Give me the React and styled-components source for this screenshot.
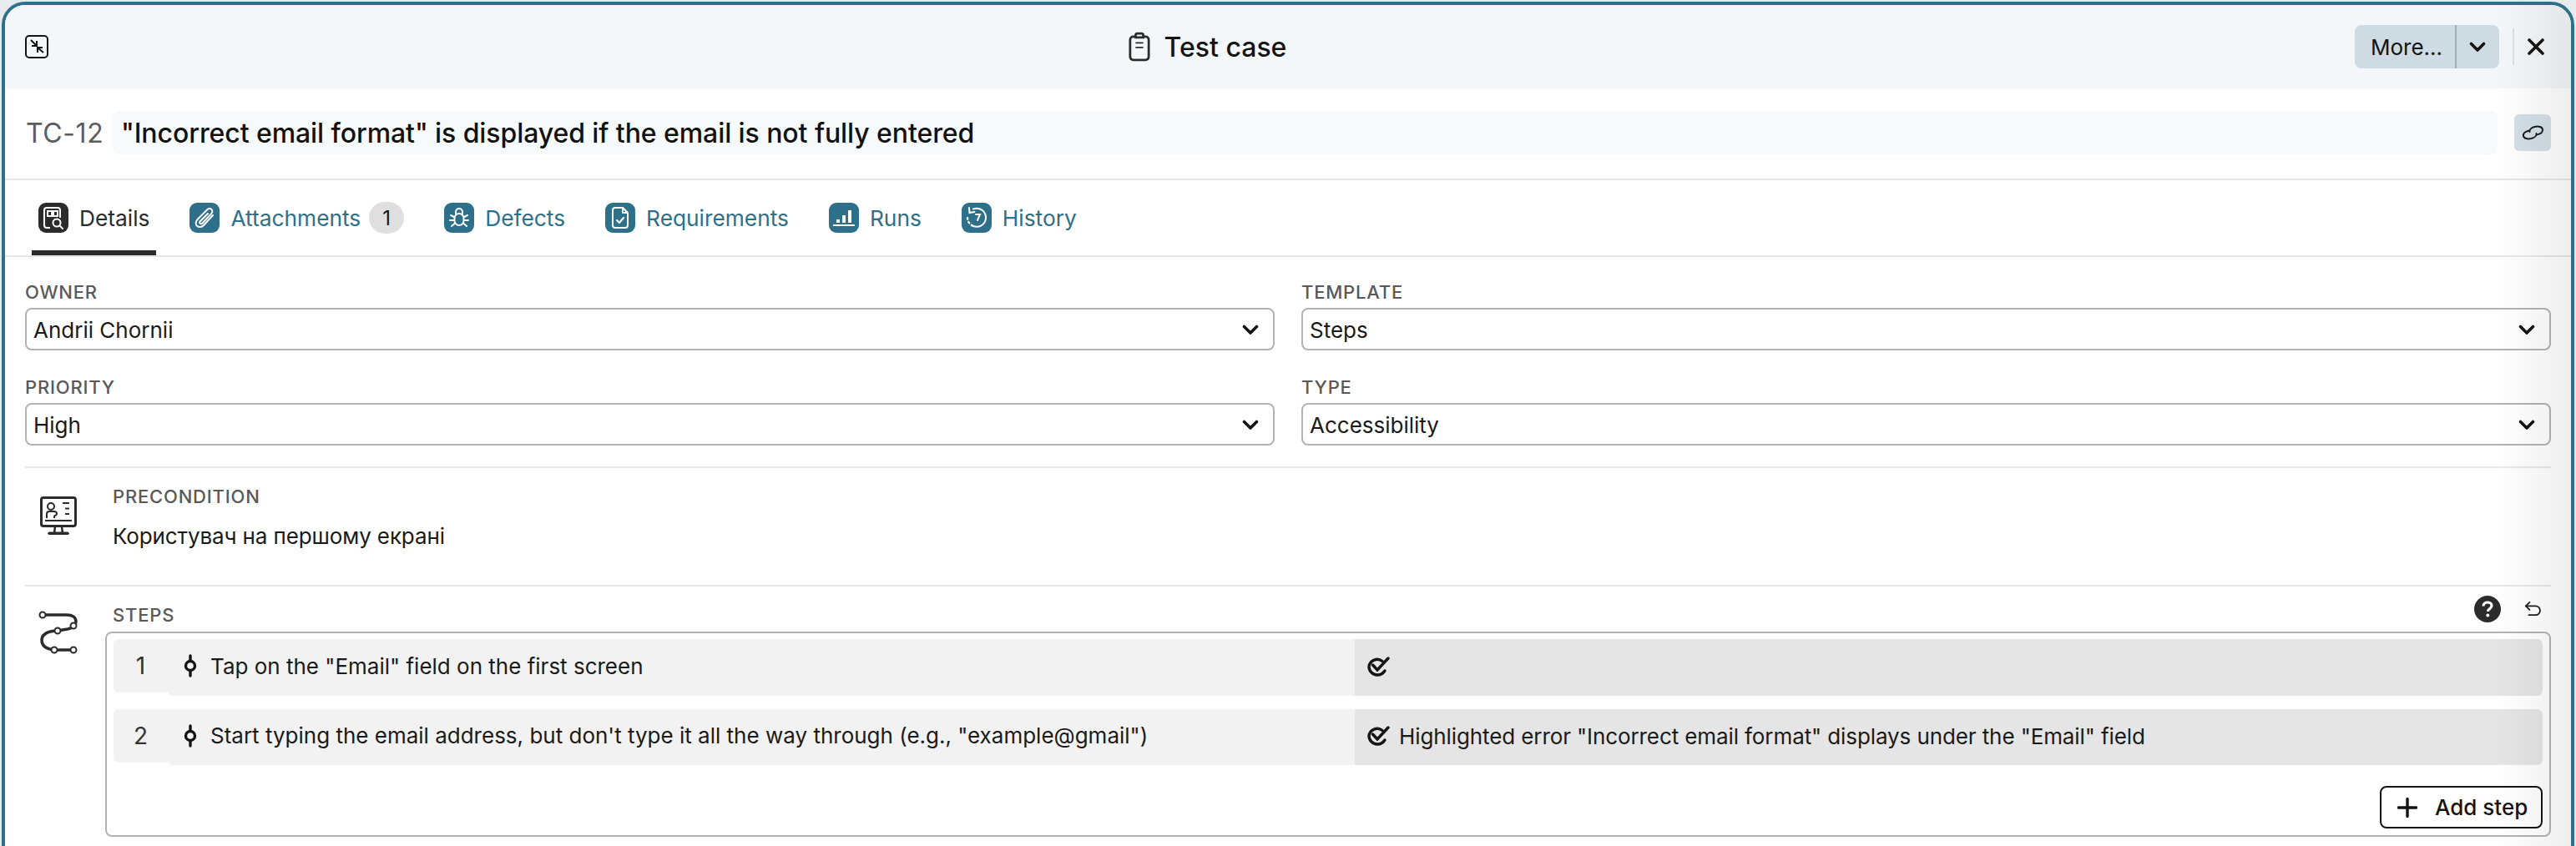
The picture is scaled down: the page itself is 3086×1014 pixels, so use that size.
import React from 'react';
import styled, { createGlobalStyle } from 'styled-components';

const Global = createGlobalStyle`
  html, body {
    margin: 0;
    padding: 0;
    background: #e6ebee;
    overflow: hidden;
  }
  * { box-sizing: border-box; }
`;

const Page = styled.div`
  width: 3086px;
  height: 1014px;
  padding: 2px 2px 0 2px;
  overflow: hidden;
  font-family: Inter, "Noto Sans", sans-serif;
  color: #1a1a1a;
`;

const Modal = styled.div`
  position: relative;
  height: 1100px;
  background: #fff;
  border: 4px solid #2e6f8a;
  border-radius: 28px 28px 0 0;
  overflow: hidden;

  &::after {
    content: '';
    position: absolute;
    top: 0;
    right: 0;
    bottom: 0;
    width: 90px;
    background: linear-gradient(to right, rgba(0, 0, 0, 0), rgba(0, 0, 0, 0.065));
    pointer-events: none;
  }
`;

const Header = styled.div`
  display: flex;
  align-items: center;
  justify-content: space-between;
  height: 100px;
  padding: 0 32px 0 24px;
  background: #f4f7f9;
`;

const HeaderTitle = styled.div`
  display: flex;
  align-items: center;
  gap: 17px;
  margin-left: 14px;
  font-size: 32px;
  font-weight: 500;
  color: #141414;
`;

const HeaderActions = styled.div`
  display: flex;
  align-items: center;
`;

const SplitButton = styled.div`
  display: flex;
  height: 52px;
  background: #cedbe3;
  border-radius: 8px;
  font-size: 26px;
  color: #141414;
`;

const SplitMain = styled.div`
  display: flex;
  align-items: center;
  width: 122px;
  padding-left: 19px;
  border-right: 2px solid #a0abb2;
`;

const SplitCaret = styled.div`
  display: flex;
  align-items: center;
  justify-content: center;
  width: 51px;
`;

const ActionDivider = styled.div`
  width: 2px;
  height: 44px;
  margin: 0 16px 0 16px;
  background: #d9dfe3;
`;

const TitleRow = styled.div`
  display: flex;
  align-items: center;
  height: 110px;
  padding: 0 24px 2px 25px;
  border-bottom: 2px solid #e6e6e6;
`;

const CaseId = styled.div`
  flex: none;
  width: 104px;
  font-size: 32px;
  letter-spacing: 0.6px;
  color: #5c5c5c;
  white-space: nowrap;
`;

const CaseName = styled.div`
  flex: 1;
  height: 52px;
  padding: 0 10px;
  line-height: 54px;
  background: #f7fafb;
  border-radius: 8px;
  font-size: 32px;
  font-weight: 500;
  letter-spacing: -0.08px;
  color: #111;
`;

const LinkButton = styled.div`
  display: flex;
  align-items: center;
  justify-content: center;
  width: 44px;
  height: 44px;
  margin-left: 20px;
  background: #d3dfe6;
  border-radius: 6px;
`;

const Tabs = styled.div`
  display: flex;
  gap: 32px;
  height: 92px;
  padding-left: 32px;
  border-bottom: 2px solid #e6e6e6;
`;

const Tab = styled.div`
  display: flex;
  align-items: center;
  gap: 13px;
  height: 90px;
  padding: 6px 8px 0 8px;
  border-bottom: 6px solid ${props => (props.$active ? '#2b2b2b' : 'transparent')};
  font-size: 26.3px;
  color: ${props => (props.$active ? '#2b2b2b' : '#2e6f8a')};
  white-space: nowrap;
`;

const TabIcon = styled.div`
  display: flex;
  align-items: center;
  justify-content: center;
  width: 36px;
  height: 36px;
  border-radius: 9px;
  background: ${props => (props.$active ? '#2b2b2b' : '#2e6f8a')};
`;

const Badge = styled.div`
  display: flex;
  align-items: center;
  justify-content: center;
  width: 42px;
  height: 38px;
  margin-left: -3px;
  border-radius: 19px;
  background: #dfdfdf;
  font-size: 24px;
  color: #141414;
`;

const Form = styled.div`
  display: grid;
  grid-template-columns: 1fr 1fr;
  column-gap: 32px;
  row-gap: 30px;
  padding: 28px 24px 25px 24px;
`;

const Field = styled.div`
  display: flex;
  flex-direction: column;
  gap: 5px;
`;

const Label = styled.div`
  font-size: 22px;
  font-weight: 500;
  line-height: 28px;
  letter-spacing: 0.8px;
  color: #595959;
`;

const Select = styled.div`
  display: flex;
  align-items: center;
  justify-content: space-between;
  height: 51px;
  padding: 1px 17px 0 8px;
  border: 2px solid #b3b3b3;
  border-radius: 8px;
  font-size: 26px;
  color: #1a1a1a;
`;

const Section = styled.div`
  display: flex;
  margin: 0 24px;
  padding-top: ${props => props.$top}px;
  border-top: 2px solid #e6e6e6;
`;

const SectionIcon = styled.div`
  flex: none;
  width: 105px;
  padding: ${props => props.$pad};
`;

const SectionBody = styled.div`
  flex: 1;
  min-width: 0;
`;

const PreText = styled.div`
  height: 92px;
  padding-top: 18px;
  font-size: 26px;
  line-height: 32px;
  letter-spacing: -0.12px;
  color: #1a1a1a;
`;

const StepsHead = styled.div`
  display: flex;
  align-items: flex-start;
  justify-content: space-between;
  height: 54px;
  padding: 11px 12px 0 0;
`;

const StepsLabel = styled(Label)`
  margin-top: 9px;
`;

const StepsTools = styled.div`
  display: flex;
  align-items: center;
  gap: 28px;
`;

const StepsBox = styled.div`
  display: flex;
  flex-direction: column;
  height: 246px;
  margin-left: -9px;
  padding: 7px 8px 8px 8px;
  border: 2px solid #b3b3b3;
  border-radius: 8px;
`;

const StepRow = styled.div`
  display: grid;
  grid-template-columns: 65px 1422px 1fr;
  align-items: start;
  margin-bottom: ${props => props.$mb}px;
`;

const StepNumber = styled.div`
  display: flex;
  align-items: center;
  justify-content: center;
  height: 64px;
  background: #f2f2f2;
  border-radius: 6px 0 0 6px;
  font-size: 28px;
  color: #333;
`;

const StepText = styled.div`
  display: flex;
  align-items: center;
  gap: 16px;
  height: ${props => props.$h}px;
  padding: 0 0 4px 19px;
  background: #f2f2f2;
  border-radius: 0 0 0 6px;
  font-size: 26px;
  color: #1a1a1a;
  white-space: nowrap;
`;

const StepResult = styled.div`
  display: flex;
  align-items: center;
  gap: 11px;
  height: ${props => props.$h}px;
  padding: 0 0 3px 14px;
  background: #e5e5e5;
  border-radius: 0 6px 6px 0;
  font-size: 26px;
  letter-spacing: -0.1px;
  color: #1a1a1a;
  white-space: nowrap;
`;

const AddRow = styled.div`
  display: flex;
  justify-content: flex-end;
  margin-top: auto;
`;

const AddButton = styled.div`
  display: flex;
  align-items: center;
  gap: 21px;
  width: 195px;
  height: 51px;
  padding-left: 19px;
  border: 2px solid #141414;
  border-radius: 8px;
  font-size: 26px;
  font-weight: 500;
  color: #141414;
  background: #fff;
`;

const Compress = () => (
  <svg width="28" height="28" viewBox="0 0 28 28" fill="none" stroke="#141414" strokeWidth="2">
    <rect x="1" y="1" width="26" height="26" rx="4" />
    <path d="M7 6l7 7M14 7v6H8M22 21l-7-6M15 21v-6h6" strokeWidth="2" />
  </svg>
);

const Clipboard = () => (
  <svg width="26" height="36" viewBox="0 0 28 38" fill="none" stroke="#2b2b2b" strokeWidth="3">
    <rect x="2" y="6" width="24" height="30" rx="4" />
    <path d="M9 7V4.500A2.500 2.500 0 0 1 11.500 2h5A2.500 2.500 0 0 1 19 4.500V7z" fill="#f4f7f9" />
    <path d="M9 14h10M9 20h10" strokeWidth="2" />
  </svg>
);

const Caret = () => (
  <svg width="20" height="13" viewBox="0 0 20 13" fill="none" stroke="#141414" strokeWidth="3.600" strokeLinecap="round" strokeLinejoin="round">
    <path d="M2.500 2.500L10 10l7.500-7.500" />
  </svg>
);

const CloseIcon = () => (
  <svg width="20" height="20" viewBox="0 0 20 20" fill="none" stroke="#141414" strokeWidth="3.600" strokeLinecap="round">
    <path d="M2 2l16 16M18 2L2 18" />
  </svg>
);

const ChainIcon = () => (
  <svg width="27" height="18" viewBox="0 0 27 18" fill="none" stroke="#1c1c1c" strokeWidth="2" strokeLinecap="round">
    <path d="M9 6.500C4.500 7.500 1.500 10 2 13C2.500 16 7 17 11.500 16C15.500 15 18 12.500 17.500 10" />
    <path d="M18 11.500C22.500 10.500 25.500 8 25 5C24.500 2 20 1 15.500 2C11.500 3 9 5.500 9.500 8" />
  </svg>
);

const DetailsIcon = () => (
  <svg width="26" height="28" viewBox="0 0 26 28" fill="none" stroke="#fff" strokeWidth="2">
    <path d="M9 26H5a3 3 0 0 1-3-3V5a3 3 0 0 1 3-3h13a3 3 0 0 1 3 3v9" />
    <path d="M6 6h5v6H6zM13 6h5v6h-5z" />
    <circle cx="17" cy="20" r="4.500" />
    <path d="M20.500 23.500L24 27" strokeLinecap="round" />
  </svg>
);

const PaperclipIcon = () => (
  <svg width="28" height="28" viewBox="0 0 28 28" fill="none" stroke="#fff" strokeWidth="2" strokeLinecap="round">
    <path d="M24 11L13 23c-2.500 2.500-6 2.800-8 .8s-1.700-5.500.8-8L17 4.500c1.700-1.700 4-1.900 5.400-.5s1.200 3.700-.5 5.400L11.500 20.500c-.9.900-2.100 1-2.800.3s-.6-1.900.3-2.800L18 9" />
  </svg>
);

const BugIcon = () => (
  <svg width="24" height="26" viewBox="0 0 24 26" fill="none" stroke="#fff" strokeWidth="2" strokeLinecap="round">
    <path d="M8 8V6a4 4 0 0 1 8 0v2" />
    <rect x="6.500" y="8" width="11" height="14" rx="5.500" />
    <path d="M6 12L2 10M18 12l4-2M6 16H1M18 16h5M6.500 20L3 23M17.500 20l3.500 3" />
  </svg>
);

const ReqIcon = () => (
  <svg width="22" height="28" viewBox="0 0 22 28" fill="none" stroke="#fff" strokeWidth="2" strokeLinecap="round" strokeLinejoin="round">
    <path d="M14 2H5a3 3 0 0 0-3 3v18a3 3 0 0 0 3 3h12a3 3 0 0 0 3-3V8z" />
    <path d="M14 2v6h6" />
    <path d="M7 17l3 3 5-6" strokeWidth="2.200" />
  </svg>
);

const RunsIcon = () => (
  <svg width="26" height="22" viewBox="0 0 26 22" fill="#fff">
    <rect x="4" y="13" width="4" height="4" />
    <rect x="11" y="8" width="4" height="9" />
    <rect x="18" y="2" width="4" height="15" />
    <rect x="0" y="19" width="26" height="2" />
  </svg>
);

const HistoryIcon = () => (
  <svg width="28" height="28" viewBox="0 0 28 28" fill="none" stroke="#fff" strokeWidth="2" strokeLinecap="round">
    <path d="M10 3.500A11 11 0 1 1 9 23.500" />
    <path d="M9 23.500A11 11 0 0 1 3 14" strokeDasharray="1.500 3.500" strokeWidth="2.400" />
    <path d="M5 2l.5 6 6-1" />
    <path d="M13 10h5l-3 7" />
  </svg>
);

const ScreenIcon = () => (
  <svg width="44" height="46" viewBox="0 0 44 46" fill="none" stroke="#2b2b2b">
    <rect x="1.500" y="1.500" width="41" height="34" rx="2.500" strokeWidth="3" />
    <path d="M18 36l-1 8M26 36l1 8" strokeWidth="2.500" />
    <path d="M11 44.200h22" strokeWidth="3.500" strokeLinecap="round" />
    <path d="M6 29h32" strokeWidth="2" />
    <circle cx="13" cy="12" r="4" strokeWidth="2" />
    <path d="M8 26v-5a3 3 0 0 1 3-3h6a3 3 0 0 1 3 3c0 2-3 1.500-3 3v2" strokeWidth="2" />
    <path d="M27 8h8M30 14.500h5M30 21h5" strokeWidth="2" />
  </svg>
);

const PathIcon = () => (
  <svg width="48" height="52" viewBox="0 0 48 52" fill="none" stroke="#2b2b2b">
    <path d="M5 5H34C41 5 45 8 45 13C45 19 40 21 35 22L23 24C12 24 4 28 4 35C4 42 10 46 19 47H42" strokeWidth="3.500" />
    <circle cx="5" cy="5" r="3.500" fill="#fff" strokeWidth="2" />
    <circle cx="42" cy="18" r="3.500" fill="#fff" strokeWidth="2" />
    <circle cx="23" cy="24" r="3.500" fill="#fff" strokeWidth="2" />
    <circle cx="19" cy="47" r="3.500" fill="#fff" strokeWidth="2" />
    <circle cx="42" cy="47" r="3.500" fill="#fff" strokeWidth="2" />
  </svg>
);

const HelpIcon = () => (
  <svg width="32" height="32" viewBox="0 0 32 32">
    <circle cx="16" cy="16" r="16" fill="#2b2b2b" />
    <path d="M11 12.500c0-3 2.300-4.500 5-4.500s5 1.500 5 4c0 3.500-4.500 3.500-4.500 7" fill="none" stroke="#fff" strokeWidth="3.200" />
    <circle cx="16.300" cy="23.500" r="2" fill="#fff" />
  </svg>
);

const UndoIcon = () => (
  <svg width="20" height="18" viewBox="0 0 22 20" fill="none" stroke="#1c1c1c" strokeWidth="2" strokeLinecap="round" strokeLinejoin="round">
    <path d="M7 1L2 6l5 5" />
    <path d="M2 6h13a5.500 5.500 0 0 1 0 12H6" />
  </svg>
);

const StepDot = () => (
  <svg width="16" height="28" viewBox="0 0 16 28" fill="none" stroke="#141414" strokeWidth="3.400" strokeLinecap="round">
    <circle cx="8" cy="14" r="5.500" />
    <path d="M8 2v6M8 20v6" />
  </svg>
);

const ResultCheck = () => (
  <svg width="28" height="24" viewBox="0 0 28 24" fill="none" stroke="#141414" strokeWidth="3.400" strokeLinecap="round">
    <path d="M19 5.500A10 10 0 0 0 3 12c0 5.500 4.500 10 10 10 4 0 7-2 9-5" />
    <path d="M7.500 10l5.500 6L26 2" />
  </svg>
);

const PlusIcon = () => (
  <svg width="24" height="24" viewBox="0 0 24 24" fill="none" stroke="#141414" strokeWidth="3.400" strokeLinecap="round">
    <path d="M12 1.500v21M1.500 12h21" />
  </svg>
);

const tabs = [
  { label: 'Details', icon: <DetailsIcon />, active: true },
  { label: 'Attachments', icon: <PaperclipIcon />, badge: 1 },
  { label: 'Defects', icon: <BugIcon /> },
  { label: 'Requirements', icon: <ReqIcon /> },
  { label: 'Runs', icon: <RunsIcon /> },
  { label: 'History', icon: <HistoryIcon /> },
];

const fields = [
  { label: 'OWNER', value: 'Andrii Chornii' },
  { label: 'TEMPLATE', value: 'Steps' },
  { label: 'PRIORITY', value: 'High' },
  { label: 'TYPE', value: 'Accessibility' },
];

const steps = [
  { n: 1, text: 'Tap on the "Email" field on the first screen', result: '', h: 68, mb: 16 },
  {
    n: 2,
    text: 'Start typing the email address, but don\'t type it all the way through (e.g., "example@gmail")',
    result: 'Highlighted error "Incorrect email format" displays under the "Email" field',
    h: 67,
    mb: 0,
  },
];

function App() {
  return (
    <Page>
      <Global />
      <Modal>
        <Header>
          <Compress />
          <HeaderTitle><Clipboard />Test case</HeaderTitle>
          <HeaderActions>
            <SplitButton>
              <SplitMain>More...</SplitMain>
              <SplitCaret><Caret /></SplitCaret>
            </SplitButton>
            <ActionDivider />
            <CloseIcon />
          </HeaderActions>
        </Header>

        <TitleRow>
          <CaseId>TC-12</CaseId>
          <CaseName>"Incorrect email format" is displayed if the email is not fully entered</CaseName>
          <LinkButton><ChainIcon /></LinkButton>
        </TitleRow>

        <Tabs>
          {tabs.map(tab => (
            <Tab key={tab.label} $active={tab.active}>
              <TabIcon $active={tab.active}>{tab.icon}</TabIcon>
              {tab.label}
              {tab.badge && <Badge>{tab.badge}</Badge>}
            </Tab>
          ))}
        </Tabs>

        <Form>
          {fields.map(field => (
            <Field key={field.label}>
              <Label>{field.label}</Label>
              <Select>
                {field.value}
                <Caret />
              </Select>
            </Field>
          ))}
        </Form>

        <Section $top={20}>
          <SectionIcon $pad="14px 0 0 18px"><ScreenIcon /></SectionIcon>
          <SectionBody>
            <Label>PRECONDITION</Label>
            <PreText>Користувач на першому екрані</PreText>
          </SectionBody>
        </Section>

        <Section $top={0}>
          <SectionIcon $pad="29px 0 0 16px"><PathIcon /></SectionIcon>
          <SectionBody>
            <StepsHead>
              <StepsLabel>STEPS</StepsLabel>
              <StepsTools><HelpIcon /><UndoIcon /></StepsTools>
            </StepsHead>
            <StepsBox>
              {steps.map(step => (
                <StepRow key={step.n} $mb={step.mb}>
                  <StepNumber>{step.n}</StepNumber>
                  <StepText $h={step.h}><StepDot />{step.text}</StepText>
                  <StepResult $h={step.h}><ResultCheck />{step.result}</StepResult>
                </StepRow>
              ))}
              <AddRow>
                <AddButton><PlusIcon />Add step</AddButton>
              </AddRow>
            </StepsBox>
          </SectionBody>
        </Section>
      </Modal>
    </Page>
  );
}

export default App;
